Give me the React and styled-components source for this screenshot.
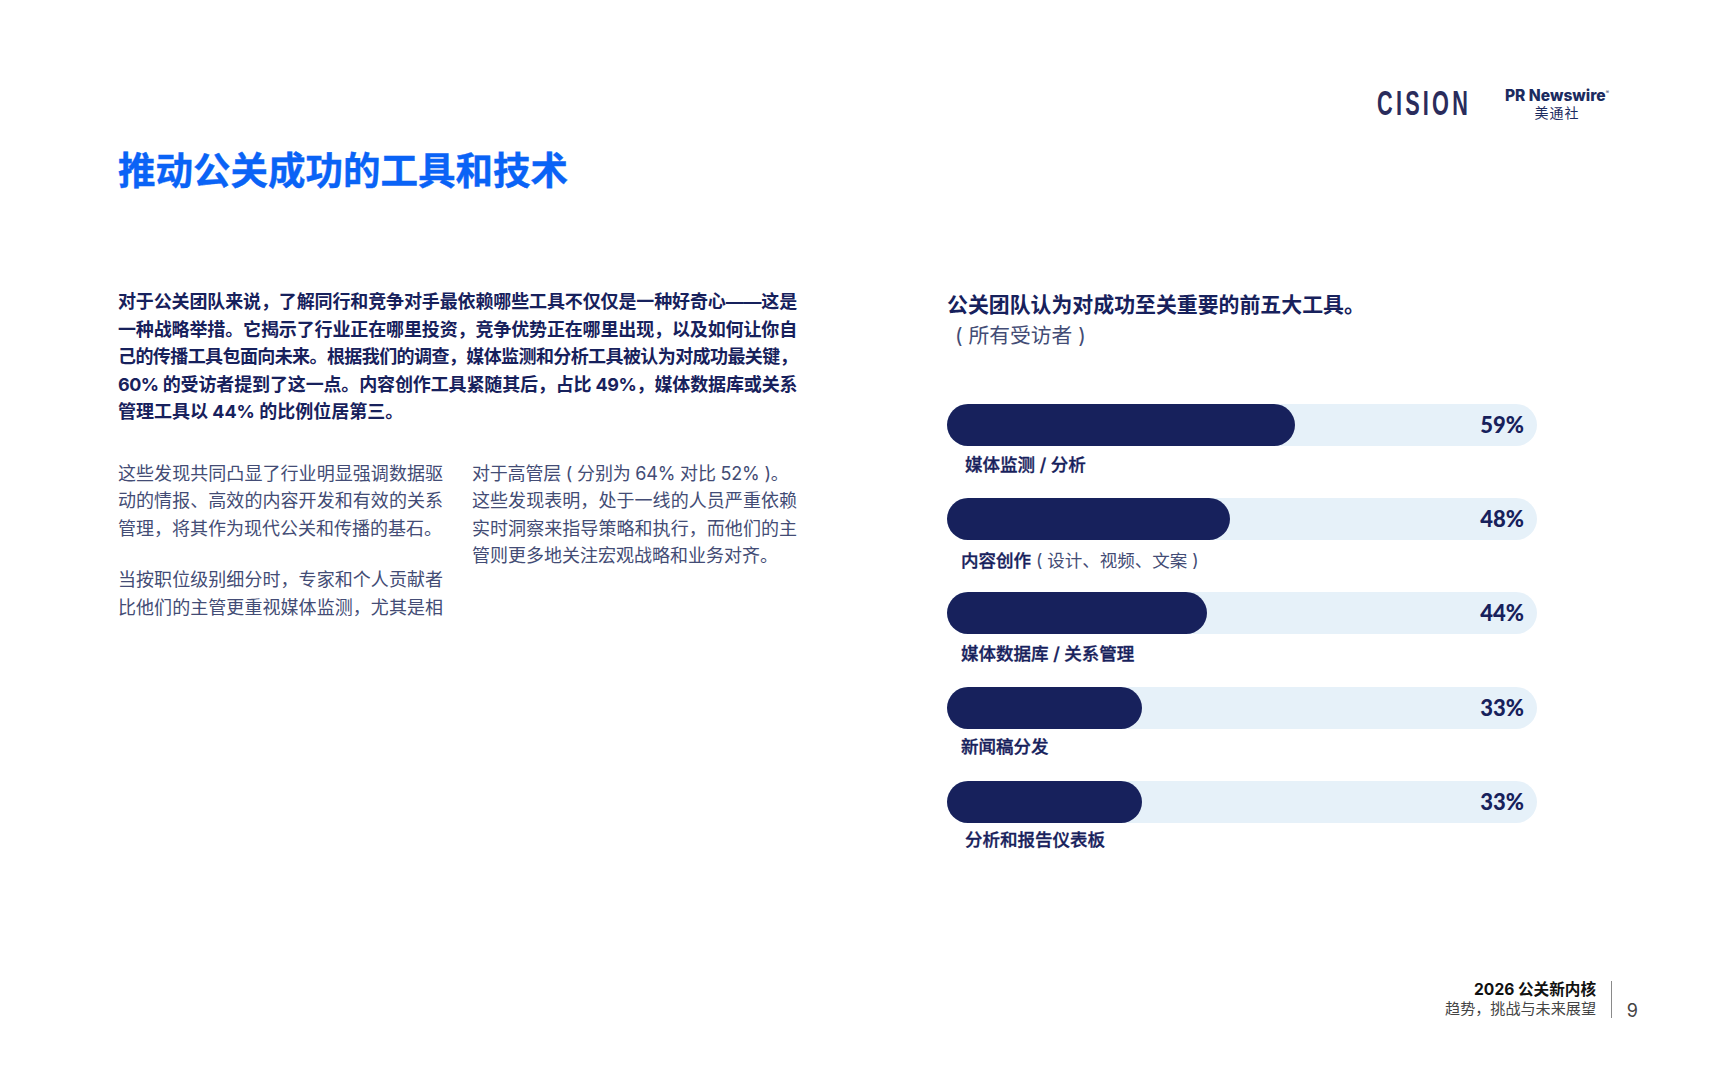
import React from 'react'
import styled, { createGlobalStyle } from 'styled-components'

const Global = createGlobalStyle`
  html, body { margin: 0; padding: 0; background: #fff; }
  body { font-family: "Inter", "Noto Sans CJK SC", sans-serif; }
`

const Page = styled.div`
  width: 1730px;
  height: 1082px;
  display: flex;
  flex-direction: column;
  padding: 88px 90px 0 118px;
  box-sizing: border-box;
  overflow: hidden;
`

const Logos = styled.div`
  display: flex;
  justify-content: flex-end;
  align-items: flex-start;
  gap: 37px;
  padding-right: 32px;
  height: 34px;
`

const Cision = styled.div`
  width: 92px;
  height: 30px;
  font: 700 35px/30px "Liberation Sans", sans-serif;
  color: #2a2c5c;
  letter-spacing: 5.2px;
  white-space: nowrap;
  transform: scaleX(0.62);
  transform-origin: left center;
`

const Newswire = styled.div`
  display: flex;
  flex-direction: column;
  align-items: center;
  width: 102px;
  color: #1b2b60;
`

const NewswireName = styled.div`
  font: 800 15.6px/16px "Inter", sans-serif;
  white-space: nowrap;
`

const Mark = styled.sup`
  font-size: 5px;
  line-height: 0;
  font-weight: 400;
  vertical-align: 7px;
`

const NewswireCn = styled.div`
  font: 400 14px/16px "Noto Sans CJK SC", sans-serif;
  letter-spacing: 1px;
`

const Title = styled.h1`
  margin: 24px 0 0;
  font: 700 37.5px/50px "Inter", "Noto Sans CJK SC", sans-serif;
  color: #0a63f6;
  -webkit-text-stroke: 0.4px #0a63f6;
`

const Columns = styled.div`
  display: flex;
  gap: 150px;
  margin-top: 92px;
`

const Left = styled.div`
  width: 679px;
`

const Lead = styled.div`
  font-size: 18px;
  line-height: 27.5px;
  font-weight: 700;
  color: #17215c;
`

const Line = styled.div`
  letter-spacing: ${p => p.$spacing || 0}px;
  text-align: justify;
  text-align-last: ${p => (p.$open ? 'start' : 'justify')};
`

const BodyCols = styled.div`
  display: grid;
  grid-template-columns: 325px 325px;
  column-gap: 29px;
  margin-top: 34px;
`

const Para = styled.div`
  margin: 0 0 24px;
  font-size: 18px;
  line-height: 27.5px;
  color: #434c75;
`

const Right = styled.div`
  width: 590px;
  padding-top: 1px;
`

const ChartTitle = styled.div`
  font-size: 20.9px;
  line-height: 31px;
  font-weight: 700;
  color: #17215c;
`

const ChartSub = styled.div`
  padding-left: 8px;
  font-size: 20.8px;
  line-height: 31px;
  color: #434c75;
`

const Rows = styled.div`
  display: flex;
  flex-direction: column;
  gap: 14.2px;
  margin-top: 53px;
`

const Track = styled.div`
  height: 42px;
  border-radius: 21px;
  background: #e6f1f9;
  display: flex;
  align-items: center;
  justify-content: flex-end;
  padding-right: 13px;
  position: relative;
`

const Fill = styled.div`
  position: absolute;
  left: 0;
  top: 0;
  bottom: 0;
  border-radius: 21px;
  background: #17215c;
`

const Value = styled.span`
  font: 900 22px/1 "Lato", sans-serif;
  color: #17215c;
`

const Label = styled.div`
  height: 38px;
  box-sizing: border-box;
  padding-top: ${p => p.$top}px;
  padding-left: ${p => p.$indent}px;
  font-size: 17.5px;
  line-height: 32px;
  font-weight: 500;
  color: #17215c;
  -webkit-text-stroke: 0.35px #17215c;
  span {
    font-weight: 400;
    color: #434c75;
    -webkit-text-stroke: 0;
  }
`

const Footer = styled.div`
  position: absolute;
  top: 981px;
  left: 0;
  width: 1730px;
  display: flex;
  justify-content: flex-end;
  padding-right: 92px;
  box-sizing: border-box;
`

const FootText = styled.div`
  text-align: right;
  padding-right: 15px;
  border-right: 1px solid #8a8a8a;
  height: 37px;
  font-size: 15.1px;
  line-height: 20px;
  color: #444;
  b {
    display: block;
    margin-bottom: 1px;
    font-size: 15.6px;
    line-height: 17px;
    color: #111;
  }
`

const PageNum = styled.div`
  width: 26px;
  margin-bottom: -2px;
  text-align: right;
  align-self: flex-end;
  font-size: 18px;
  line-height: 18px;
  color: #444;
`

const leadLines = [
  { text: '对于公关团队来说，了解同行和竞争对手最依赖哪些工具不仅仅是一种好奇心——这是', spacing: -0.2 },
  { text: '一种战略举措。它揭示了行业正在哪里投资，竞争优势正在哪里出现，以及如何让你自', spacing: -0.2 },
  { text: '己的传播工具包面向未来。根据我们的调查，媒体监测和分析工具被认为对成功最关键，', spacing: -0.65 },
  { text: '60% 的受访者提到了这一点。内容创作工具紧随其后，占比 49%，媒体数据库或关系', spacing: -0.5 },
  { text: '管理工具以 44% 的比例位居第三。', open: true },
]

const leftParas = [
  [
    { text: '这些发现共同凸显了行业明显强调数据驱' },
    { text: '动的情报、高效的内容开发和有效的关系' },
    { text: '管理，将其作为现代公关和传播的基石。', open: true },
  ],
  [
    { text: '当按职位级别细分时，专家和个人贡献者' },
    { text: '比他们的主管更重视媒体监测，尤其是相' },
  ],
]

const rightParas = [
  [
    { text: '对于高管层 ( 分别为 64% 对比 52% )。', spacing: -0.2, open: true },
    { text: '这些发现表明，处于一线的人员严重依赖' },
    { text: '实时洞察来指导策略和执行，而他们的主' },
    { text: '管则更多地关注宏观战略和业务对齐。', open: true },
  ],
]

const bars = [
  { pct: 59, width: 348, label: '媒体监测 / 分析', indent: 18, top: 3 },
  { pct: 48, width: 283, label: '内容创作', note: ' ( 设计、视频、文案 )', indent: 14, top: 5 },
  { pct: 44, width: 260, label: '媒体数据库 / 关系管理', indent: 14, top: 4 },
  { pct: 33, width: 195, label: '新闻稿分发', indent: 14, top: 2.4 },
  { pct: 33, width: 195, label: '分析和报告仪表板', indent: 18, top: 1.7 },
]

const renderLines = lines =>
  lines.map(l => (
    <Line key={l.text} $spacing={l.spacing} $open={l.open}>
      {l.text}
    </Line>
  ))

export default function App() {
  return (
    <Page>
      <Global />
      <Logos>
        <Cision>CISION</Cision>
        <Newswire>
          <NewswireName>PR Newswire<Mark>®</Mark></NewswireName>
          <NewswireCn>美通社</NewswireCn>
        </Newswire>
      </Logos>
      <Title>推动公关成功的工具和技术</Title>
      <Columns>
        <Left>
          <Lead>{renderLines(leadLines)}</Lead>
          <BodyCols>
            <div>
              {leftParas.map(p => (
                <Para key={p[0].text}>{renderLines(p)}</Para>
              ))}
            </div>
            <div>
              {rightParas.map(p => (
                <Para key={p[0].text}>{renderLines(p)}</Para>
              ))}
            </div>
          </BodyCols>
        </Left>
        <Right>
          <ChartTitle>公关团队认为对成功至关重要的前五大工具。</ChartTitle>
          <ChartSub>( 所有受访者 )</ChartSub>
          <Rows>
            {bars.map(b => (
              <div key={b.label}>
                <Track>
                  <Fill style={{ width: b.width }} />
                  <Value>{b.pct}%</Value>
                </Track>
                <Label $indent={b.indent} $top={b.top}>
                  {b.label}
                  {b.note && <span>{b.note}</span>}
                </Label>
              </div>
            ))}
          </Rows>
        </Right>
      </Columns>
      <Footer>
        <FootText>
          <b>2026 公关新内核</b>
          趋势，挑战与未来展望
        </FootText>
        <PageNum>9</PageNum>
      </Footer>
    </Page>
  )
}
